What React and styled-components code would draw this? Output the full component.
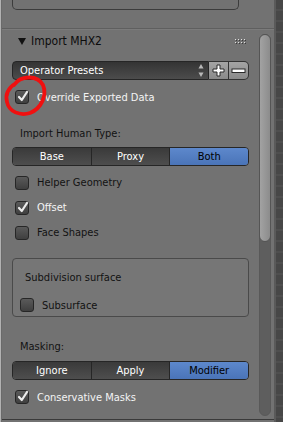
import React from "react";
import styled, { createGlobalStyle } from "styled-components";

const Global = createGlobalStyle`
  html, body { margin: 0; padding: 0; background: #727272; }
  body {
    width: 283px; height: 422px; overflow: hidden;
    font-family: "DejaVu Sans Condensed", "DejaVu Sans", "Liberation Sans", sans-serif;
    font-stretch: semi-condensed;
    font-size: 11px;
  }
`;

const Frame = styled.div`
  position: relative;
  display: flex;
  width: 283px;
  height: 422px;
  overflow: hidden;
  background: #727272;
`;

const LeftEdge = styled.div`
  flex: none;
  width: 2px;
  background: #b2b2b2;
  border-right: 1px solid #6a6a6a;
  box-sizing: border-box;
`;

const Main = styled.div`
  flex: 1;
  display: flex;
  flex-direction: column;
  min-width: 0;
`;

const RightStrip = styled.div`
  flex: none;
  width: 9px;
  box-sizing: border-box;
  border-left: 2px solid #5a5a5a;
  background: repeating-linear-gradient(
    to bottom,
    #474747 0px, #474747 9px, #4f4f4f 9px, #4f4f4f 11px
  );
`;

const TopArea = styled.div`
  height: 28px;
  flex: none;
  padding-left: 10px;
`;

const TopBox = styled.div`
  position: relative;
  margin-top: -8px;
  width: 227px;
  height: 18px;
  box-sizing: border-box;
  border: 1px solid #3c3c3c;
  border-top: none;
  border-radius: 0 0 5px 5px;
  display: flex;
  align-items: flex-start;
  padding-left: 10px;
`;

const Separator = styled.div`
  flex: none;
  height: 1px;
  background: #5f5f5f;
  border-bottom: 1px solid #7b7b7b;
`;

const PanelRow = styled.div`
  flex: 1;
  display: flex;
  min-height: 0;
`;

const PanelBody = styled.div`
  width: 237px;
  margin-left: 10px;
  display: flex;
  flex-direction: column;
`;

const Header = styled.div`
  height: 22px;
  display: flex;
  align-items: center;
  padding-left: 6px;
  padding-right: 3px;
  color: #0c0c0c;
  font-size: 12px;
`;

const HeaderTitle = styled.span`
  margin-left: 5px;
  flex: 1;
`;

const Triangle = styled.span`
  width: 0; height: 0;
  border-left: 4px solid transparent;
  border-right: 4px solid transparent;
  border-top: 7px solid #111;
`;

const PresetRow = styled.div`
  margin-top: 9px;
  height: 19px;
  display: flex;
`;

const Dropdown = styled.div`
  flex: 1;
  box-sizing: border-box;
  border: 1px solid #262626;
  border-radius: 4px 0 0 4px;
  background: linear-gradient(#343434, #4c4c4c);
  color: #fff;
  display: flex;
  align-items: center;
  padding: 0 4px 0 7px;
`;

const DropText = styled.span`
  flex: 1;
`;

const SmallBtn = styled.div`
  width: 20px;
  box-sizing: border-box;
  border: 1px solid #333;
  border-left: none;
  border-radius: ${p => (p.$last ? "0 5px 5px 0" : "0")};
  background: linear-gradient(#a4a4a4, #8a8a8a);
  display: flex;
  align-items: center;
  justify-content: center;
`;

const OptionRow = styled.div`
  height: ${p => p.$h || 20}px;
  margin-top: ${p => p.$mt || 0}px;
  display: flex;
  align-items: center;
  padding-left: ${p => p.$pl ?? 3}px;
  color: ${p => (p.$on ? "#f4f4f4" : "#121212")};
`;

const Box = styled.span`
  position: relative;
  flex: none;
  width: 14px;
  height: 14px;
  box-sizing: border-box;
  border: 1px solid #262626;
  border-radius: 3px;
  background: linear-gradient(#5a5a5a, #3f3f3f);
  margin-right: 8px;
`;

const Check = styled.svg`
  position: absolute;
  left: 0px;
  top: -2px;
`;

const Label = styled.div`
  height: 20px;
  margin-top: ${p => p.$mt || 0}px;
  display: flex;
  align-items: center;
  padding-left: ${p => p.$pl ?? 8}px;
  color: #121212;
`;

const Segmented = styled.div`
  margin-top: ${p => p.$mt || 0}px;
  height: 19px;
  display: flex;
  box-sizing: border-box;
  border: 1px solid #262626;
  border-radius: 4px;
  overflow: hidden;
`;

const Seg = styled.div`
  flex: 1;
  display: flex;
  align-items: center;
  justify-content: center;
  color: ${p => (p.$on ? "#000" : "#fff")};
  background: ${p =>
    p.$on ? "linear-gradient(#5d88cc, #4a74b8)" : "linear-gradient(#3a3a3a, #4e4e4e)"};
  & + & { border-left: 1px solid #262626; }
`;

const GroupBox = styled.div`
  margin-top: ${p => p.$mt || 0}px;
  height: 59px;
  box-sizing: border-box;
  border: 1px solid #4a4a4a;
  border-radius: 4px;
  background: #767676;
  display: flex;
  flex-direction: column;
`;

const Scroll = styled.div`
  position: relative;
  width: 12px;
  margin: 4px 0 2px 10px;
  box-sizing: border-box;
  border-radius: 6px;
  background: #5e5e5e;
  border: 1px solid #595959;
`;

const Thumb = styled.div`
  height: 208px;
  margin: -1px;
  box-sizing: border-box;
  border: 1px solid #555;
  border-radius: 6px;
  background: linear-gradient(to right, #a2a2a2, #8c8c8c);
`;

const BottomLine = styled.div`
  flex: none;
  height: 1px;
  margin-top: 1px;
  background: #3a3a3a;
  margin-bottom: 2px;
`;

const Annotation = styled.svg`
  position: absolute;
  left: 0;
  top: 70px;
  pointer-events: none;
`;

const CheckMark = () => (
  <Check width="14" height="15" viewBox="0 0 14 15">
    <path d="M3 8 L5.8 11 L11 3" fill="none" stroke="#ececec" strokeWidth="2.2" strokeLinecap="round" strokeLinejoin="round" />
  </Check>
);

const Option = ({ on, label, mt, pl, h }) => (
  <OptionRow $on={on} $mt={mt} $pl={pl} $h={h}>
    <Box>{on && <CheckMark />}</Box>
    <span>{label}</span>
  </OptionRow>
);

const Grip = () => (
  <svg width="11" height="5" viewBox="0 0 11 5">
    {[0, 3, 6, 9].map(x => (
      <g key={x}>
        <rect x={x} y="0" width="1" height="1" fill="#e0e0e0" />
        <rect x={x + 1} y="1" width="1" height="1" fill="#3a3a3a" />
        <rect x={x} y="3" width="1" height="1" fill="#e0e0e0" />
        <rect x={x + 1} y="4" width="1" height="1" fill="#3a3a3a" />
      </g>
    ))}
  </svg>
);

const UpDown = () => (
  <svg width="6" height="15" viewBox="0 0 6 15">
    <path d="M3 1 L5.5 5.5 L0.5 5.5 Z" fill="#b8b8b8" />
    <path d="M3 14 L5.5 9.5 L0.5 9.5 Z" fill="#b8b8b8" />
  </svg>
);

const Plus = () => (
  <svg width="13" height="13" viewBox="0 0 13 13">
    <path d="M5 1 H8 V5 H12 V8 H8 V12 H5 V8 H1 V5 H5 Z" fill="#fff" stroke="#2a2a2a" strokeWidth="1" />
  </svg>
);

const Minus = () => (
  <svg width="15" height="6" viewBox="0 0 15 6">
    <rect x="1" y="1" width="13" height="3.5" fill="#fff" stroke="#2a2a2a" strokeWidth="1" />
  </svg>
);

export default function App() {
  return (
    <>
      <Global />
      <Frame>
        <LeftEdge />
        <Main>
          <TopArea>
            <TopBox>
              <svg width="120" height="10" viewBox="0 0 120 10">
                <circle cx="4" cy="3" r="3.5" fill="none" stroke="#2e2e2e" strokeWidth="1" />
                <path d="M4 1 V5 M2 3 H6" stroke="#cfcfcf" strokeWidth="1" />
                <rect x="106" y="2" width="14" height="1" fill="#1e1e1e" />
                <rect x="106" y="4.5" width="14" height="1" fill="#1e1e1e" />
              </svg>
            </TopBox>
          </TopArea>
          <Separator />
          <PanelRow>
            <PanelBody>
              <Header>
                <Triangle />
                <HeaderTitle>Import MHX2</HeaderTitle>
                <Grip />
              </Header>
              <PresetRow>
                <Dropdown>
                  <DropText>Operator Presets</DropText>
                  <UpDown />
                </Dropdown>
                <SmallBtn><Plus /></SmallBtn>
                <SmallBtn $last><Minus /></SmallBtn>
              </PresetRow>
              <Option on label="Override Exported Data" mt={7} />
              <Label $mt={16}>Import Human Type:</Label>
              <Segmented $mt={4}>
                <Seg>Base</Seg>
                <Seg>Proxy</Seg>
                <Seg $on>Both</Seg>
              </Segmented>
              <Option label="Helper Geometry" mt={4} h={25} />
              <Option on label="Offset" h={25} />
              <Option label="Face Shapes" h={25} />
              <GroupBox $mt={13}>
                <Label $mt={8} $pl={12}>Subdivision surface</Label>
                <Option label="Subsurface" mt={8} pl={7} />
              </GroupBox>
              <Label $mt={19}>Masking:</Label>
              <Segmented $mt={5}>
                <Seg>Ignore</Seg>
                <Seg>Apply</Seg>
                <Seg $on>Modifier</Seg>
              </Segmented>
              <Option on label="Conservative Masks" mt={7} />
            </PanelBody>
            <Scroll>
              <Thumb />
            </Scroll>
          </PanelRow>
          <BottomLine />
        </Main>
        <RightStrip />
        <Annotation width="50" height="50" viewBox="0 0 50 50">
          <path
            d="M14 15 C20 6, 37 4, 43 15 C47 25, 42 38, 30 43 C20 46, 9 42, 7 32 C5 24, 8 18, 16 13"
            fill="none" stroke="#f01010" strokeWidth="3.8" strokeLinecap="round"
          />
        </Annotation>
      </Frame>
    </>
  );
}
